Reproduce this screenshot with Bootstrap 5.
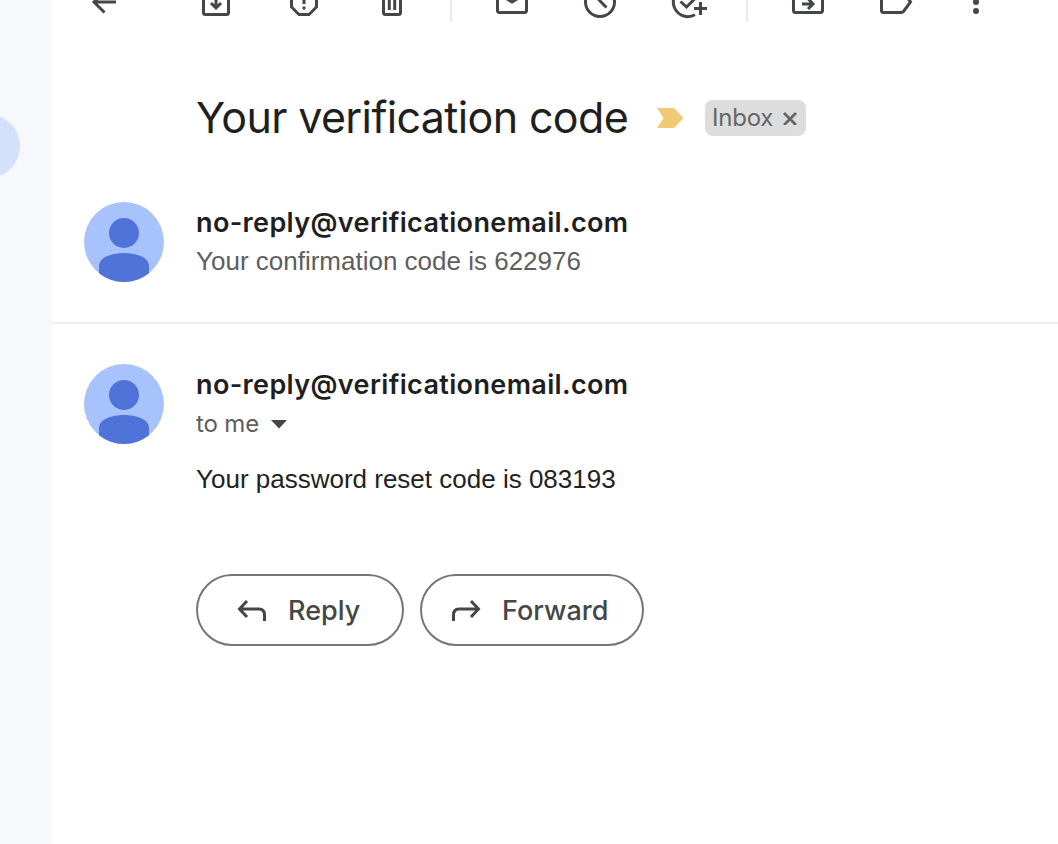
<!DOCTYPE html>
<html lang="en">
<head>
<meta charset="utf-8">
<meta name="viewport" content="width=device-width, initial-scale=1">
<title>Your verification code</title>
<link href="https://cdn.jsdelivr.net/npm/bootstrap@5.3.0/dist/css/bootstrap.min.css" rel="stylesheet">
<style>
body{font-family:Inter,"Liberation Sans",sans-serif;color:#1f1f1f;background:#fff;height:844px;overflow:hidden}
.side-rail{width:52px;background:#f6f8fc;padding-top:114px;overflow:hidden}
.side-pill{width:64px;height:64px;margin-left:-44px;border-radius:50%;background:#d3e1fb}
.toolbar{height:22px;padding-left:8px}
.tool{width:88px;height:22px;padding:0;border:0;background:none;line-height:0;flex:none}
.tool svg{width:100%;height:22px;fill:none;stroke:#444746;stroke-width:3}
.tool-sep{width:2px;height:22px;background:#ebebeb;margin:0 16px 0 14px;flex:none}
.subject-row{height:60px;margin-top:66px;padding-left:144px}
.subject{font-size:43px;line-height:58px;padding-bottom:2px;letter-spacing:-.63px;font-weight:400;width:461px;white-space:nowrap}
.inbox-chip{width:101px;height:36px;border-radius:8px;background:#ddd;color:#666;font-size:24px;line-height:36px;padding:0 9px 0 7px;margin-left:21px;letter-spacing:-.2px}
.message{padding-left:32px}
.first-msg{height:176px;padding-top:54px;border-bottom:2px solid #eceeef}
.avatar{width:80px;height:80px;margin-right:32px;flex:none}
.sender{font-size:27px;line-height:38px;padding-top:2px;font-weight:600;letter-spacing:.36px;white-space:nowrap}
.plain{font-family:"Liberation Sans",Arial,sans-serif;font-size:26px}
.snippet{color:#5e5e5e;line-height:38px}
.recipient{color:#5e5e5e;font-size:24px;line-height:38px;padding-top:1px;letter-spacing:-.15px}
.body-text{line-height:40px;margin-top:16px;color:#222}
.actions{margin-top:75px;gap:16px}
.action{height:72px;border:2px solid #747775;border-radius:36px;color:#444746;font-size:27px;font-weight:500;padding:2px 0 0;letter-spacing:.05px}
.action svg{width:32px;height:28px;fill:none;stroke:#444746;stroke-width:3}
</style>
</head>
<body class="d-flex">
<aside class="side-rail flex-shrink-0"><div class="side-pill"></div></aside>
<main class="flex-grow-1">
<div class="toolbar d-flex">
<button class="tool" aria-label="Back"><svg viewBox="-44 0 88 22"><path d="M12 2H-10M.5 12.500L-10 2L.5-8.500"/></svg></button>
<button class="tool ms-4" aria-label="Archive"><svg viewBox="-44 0 88 22"><path d="M-12.500-6V12.500Q-12.500 14.500-10.500 14.500H10.500Q12.500 14.500 12.500 12.500V-6M0-4V8M-5 3L0 8L5 3"/></svg></button>
<button class="tool" aria-label="Report spam"><svg viewBox="-44 0 88 22"><path d="M-12.500-4V7L-5 14.500H5L12.500 7V-4M0-5V4"/><circle cx="0" cy="8" r="1.700" fill="#444746" stroke="none"/></svg></button>
<button class="tool" aria-label="Delete"><svg viewBox="-44 0 88 22"><path d="M-8.500-4V12.500Q-8.500 14.500-6.500 14.500H6.500Q8.500 14.500 8.500 12.500V-4M-2.700-4V10M2.700-4V10"/></svg></button>
<div class="tool-sep"></div>
<button class="tool" aria-label="Mark as unread"><svg viewBox="-44 0 88 22"><path d="M-14.500-6V10.500Q-14.500 12.500-12.500 12.500H12.500Q14.500 12.500 14.500 10.500V-6M-13-6L0 2L13-6"/></svg></button>
<button class="tool" aria-label="Snooze"><svg viewBox="-44 0 88 22"><circle cx="0" cy="2" r="14.500"/><path d="M-1-6V0L6.500 7.500"/></svg></button>
<button class="tool" aria-label="Add to tasks"><svg viewBox="-44 0 88 22"><path d="M7 14.700A14.500 14.500 0 1 1 13-4M-7.500 1.500L-1.500 7L10-4.500M12.500 2V15M6 8.500H19"/></svg></button>
<div class="tool-sep"></div>
<button class="tool" aria-label="Move to"><svg viewBox="-44 0 88 22"><path d="M-14.500-6V10.500Q-14.500 12.500-12.500 12.500H12.500Q14.500 12.500 14.500 10.500V-6M-6 4H4.500M0-1.500L5 4L0 9"/></svg></button>
<button class="tool" aria-label="Labels"><svg viewBox="-44 0 88 22"><path d="M-14.500-6V10.500Q-14.500 12.500-12.500 12.500H5.500Q6.500 12.500 7.500 11.500L14.500 2L9-6"/></svg></button>
<button class="tool" style="width:72px" aria-label="More"><svg viewBox="-36 0 72 22"><g fill="#444746" stroke="none"><circle cx="0" cy="2" r="3"/><circle cx="0" cy="11" r="3"/></g></svg></button>
</div>
<header class="subject-row d-flex align-items-center">
<h1 class="subject m-0">Your verification code</h1>
<svg width="27" height="20" viewBox="0 0 27 20"><path d="M0 0H17L26.500 10L17 20H0L6.500 10Z" fill="#f0cb74"/></svg>
<div class="inbox-chip d-flex align-items-center justify-content-between"><span>Inbox</span><svg width="14" height="14" viewBox="0 0 14 14"><path d="M1 2L13 14M13 2L1 14" stroke="#666" stroke-width="2.800"/></svg></div>
</header>
<article class="message first-msg d-flex">
<svg class="avatar" viewBox="0 0 80 80"><circle cx="40" cy="40" r="40" fill="#a8c2fb"/><circle cx="40" cy="31" r="15" fill="#4f73d9"/><path d="M15 71.200V64C15 55 28 51 40 51S65 55 65 64V71.200A40 40 0 0 1 15 71.200Z" fill="#4f73d9"/></svg>
<div><div class="sender">no-reply@verificationemail.com</div><div class="plain snippet">Your confirmation code is 622976</div></div>
</article>
<article class="message d-flex" style="padding-top:40px">
<svg class="avatar" viewBox="0 0 80 80"><circle cx="40" cy="40" r="40" fill="#a8c2fb"/><circle cx="40" cy="31" r="15" fill="#4f73d9"/><path d="M15 71.200V64C15 55 28 51 40 51S65 55 65 64V71.200A40 40 0 0 1 15 71.200Z" fill="#4f73d9"/></svg>
<div><div class="sender">no-reply@verificationemail.com</div>
<div class="recipient d-flex align-items-center"><span>to me</span><svg style="margin-left:12px" width="16" height="9" viewBox="0 0 16 9"><path d="M0 0H16L8 8.500Z" fill="#444746"/></svg></div>
<div class="plain body-text">Your password reset code is 083193</div>
<div class="actions d-flex">
<button class="btn action d-flex align-items-center" style="width:208px"><svg style="margin-left:39px;margin-right:19px" viewBox="0 0 32 28"><path d="M10 4L2.500 12L10 20M2.500 12H22Q27.500 12 27.500 18V24"/></svg><span>Reply</span></button>
<button class="btn action d-flex align-items-center" style="width:224px"><svg style="margin-left:27px;margin-right:21px" viewBox="0 0 32 28"><path d="M22 4L29.500 12L22 20M29.500 12H10Q4.500 12 4.500 18V24"/></svg><span>Forward</span></button>
</div></div>
</article>
</main>
<script src="https://cdn.jsdelivr.net/npm/bootstrap@5.3.0/dist/js/bootstrap.bundle.min.js"></script>
</body>
</html>
